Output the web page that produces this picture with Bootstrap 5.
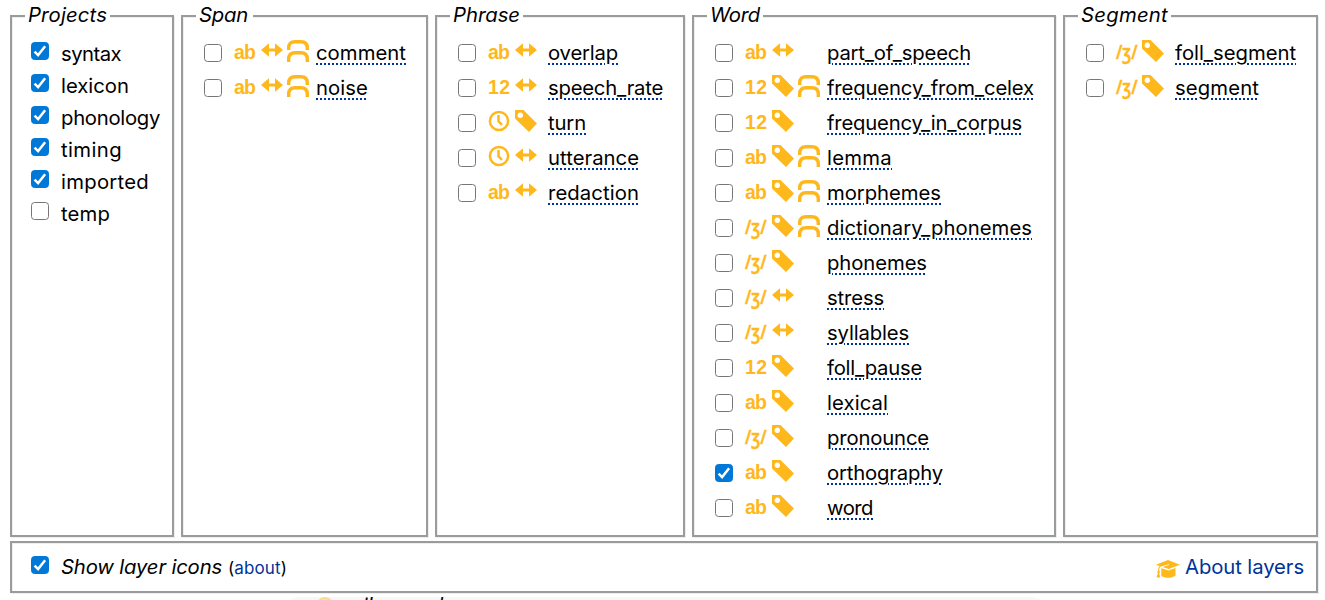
<!DOCTYPE html>
<html lang="en">
<head>
<meta charset="utf-8">
<title>Layers</title>
<link href="https://cdn.jsdelivr.net/npm/bootstrap@5.3.0/dist/css/bootstrap.min.css" rel="stylesheet">
<style>
body{font-family:Inter,Roboto,sans-serif;font-size:20.3px;line-height:32px;color:#000;background:#fff;height:600px;overflow:hidden}
.layer-grid{display:grid;grid-template-columns:164px 247px 250px 364px 255px;gap:7px;padding:15px 0 0 10px;height:537px}
.pane{position:relative;border:2px solid #9a9c9b;box-shadow:1px 1px 0 #eee,inset 1px 1px 0 #eee}
.pane-title{position:absolute;top:-18px;left:13px;height:32px;line-height:32px;background:#fff;font-style:italic;padding-left:3px;white-space:nowrap}
.fit{white-space:nowrap;display:block}
.form-check-input.box{width:18px;height:18px;margin:0;flex:none;border:1.5px solid #767676;border-radius:3.5px;background-color:#fff;box-shadow:none}
.form-check-input.box:checked{background-color:#0078d7;border-color:#0078d7;background-size:18px 18px;background-position:center;background-image:url("data:image/svg+xml,%3csvg xmlns='http://www.w3.org/2000/svg' viewBox='0 0 18 18'%3e%3cpath d='M3.6 9.6l3.5 3.5L14.1 4.3' fill='none' stroke='%23fff' stroke-width='2.5'/%3e%3c/svg%3e")}
.project{height:32px}
.project .box{margin-top:6px}
.project .fit{margin:2px 0 0 12px}
.projects{padding:19px 0 0 19px}
.layers{padding:18.5px 0 0 21px}
.layer{height:35px}
.ico{width:22px;height:22px;flex:none;display:block;fill:#ffb81c;overflow:visible}
.ico text{font-family:"Liberation Sans",sans-serif;font-weight:bold;font-size:19.5px}
.ico .ipa{font-family:"Noto Sans","DejaVu Sans",sans-serif;font-weight:600;font-size:19px;stroke:#ffb81c;stroke-width:.5px}
.lname{text-decoration:underline dotted #039 2px;text-underline-offset:3px;text-decoration-skip-ink:auto}
.footer-pane{margin:4px 0 0 10px;width:1308px;height:52px;padding:0 12px 0 19px}
.footer-pane .box{margin-top:-5px}
.about{color:#039;text-decoration:none}
.next-bar{margin:4px 0 0 290px;width:750px;height:3px;overflow:hidden;background:#f7f7f7;border-radius:12px 12px 0 0/3px 3px 0 0;padding-left:26px}
.next-bar .fit{line-height:24px;margin:-5px 0 0 18px}
</style>
</head>
<body>
<main class="layer-grid" id="grid"></main>
<footer class="pane footer-pane d-flex align-items-center">
  <input class="form-check-input box" type="checkbox" checked>
  <span class="fit fst-italic" data-w="161" style="margin-left:12px">Show layer icons</span>
  <span class="fit" data-w="59" style="margin-left:6px;font-size:17px;padding-top:2px">(<a class="about" href="#">about</a>)</span>
  <svg class="ms-auto mt-1" width="24" height="18" viewBox="0 0 24 18" fill="#ffb81c"><path d="M0 4.7L12 0l12 4.7-11.4 4.2-6-2 6.4-2-.3-.7-7.900 2.300C3.600 7.400 3.200 8.900 3.200 10.500l.8 1.500-.7 1.200.8 4.300H.5l1.300-4.300-.6-1.400.9-1.300c0-1.600.4-3.200 1.500-4.400z"/><path d="M5.300 8.200l7.200 2.400 7-2.500v7.300c-3.600 3.200-10.600 3.200-14.200.3z"/></svg>
  <a class="about fit" href="#" data-w="119" style="margin-left:5px">About layers</a>
</footer>
<div class="next-bar d-flex align-items-start">
  <svg width="18" height="18" viewBox="0 0 18 18"><circle cx="9" cy="9" r="8" fill="#ffe3a4" stroke="#ffd98a" stroke-width="2"/></svg>
  <span class="fit fst-italic" data-w="90">other word</span>
</div>
<script>
const icons = {
  ab:'<text x="0" y="18.700" textLength="22">ab</text>',
  num:'<text x="0" y="18.700" textLength="22">12</text>',
  ipa:'<text class="ipa" x="0" y="18.500" textLength="21.500" lengthAdjust="spacingAndGlyphs">/ʒ/</text>',
  clock:'<circle cx="11" cy="11" r="9.100" fill="none" stroke="#ffb81c" stroke-width="2.500"/><path d="M10.500 5v6.300l3.500 3.500" fill="none" stroke="#ffb81c" stroke-width="2.500"/>',
  arrow:'<path d="M0 10L8 3.300V8.500h6V3.300L22 10l-8 6.700v-5.200H8v5.200z"/>',
  tag:'<path fill-rule="evenodd" d="M0 0h8.500L22 13.500 14 22 0 8.500zM5.300 2.500a2.800 2.800 0 1 0 .01 0z"/>',
  arch:'<path d="M1.700 10V8Q1.700 1.700 8 1.700h6Q20.300 1.700 20.300 8v2M1.700 22v-3Q1.700 12.700 8 12.700h6Q20.300 12.700 20.300 19V22" fill="none" stroke="#ffb81c" stroke-width="3.400"/>'
};
const panes = [
 ['Span',49,57,3,[['ab arrow arch','comment',90],['ab arrow arch','noise',52]]],
 ['Phrase',67,73,2,[['ab arrow','overlap',70],['num arrow','speech_rate',115],['clock tag','turn',38],['clock arrow','utterance',91],['ab arrow','redaction',91]]],
 ['Word',50,56,3,[['ab arrow','part_of_speech',144],['num tag arch','frequency_from_celex',207],['num tag','frequency_in_corpus',195],['ab tag arch','lemma',65],['ab tag arch','morphemes',114],['ipa tag arch','dictionary_phonemes',205],['ipa tag','phonemes',100],['ipa arrow','stress',57],['ipa arrow','syllables',82],['num tag','foll_pause',95],['ab tag','lexical',61],['ipa tag','pronounce',102],['ab tag','orthography',116],['ab tag','word',46]]],
 ['Segment',87,93,2,[['ipa tag','foll_segment',121],['ipa tag','segment',84]]]
];
const title=(t,w,full)=>`<div class="pane-title" style="width:${full}px"><span class="fit" data-w="${w}">${t}</span></div>`;
const box=c=>`<input class="form-check-input box d-block" type="checkbox"${c?' checked':''}>`;
const svg=n=>`<svg class="ico" viewBox="0 0 22 22">${icons[n]||''}</svg>`;
let html=`<section class="pane projects">${title('Projects',79,85)}`;
[['syntax',60],['lexicon',68],['phonology',99],['timing',61],['imported',88],['temp',49]].forEach(([t,w])=>{
  html+=`<label class="project d-flex align-items-start">${box(t!=='temp')}<span class="fit" data-w="${w}">${t}</span></label>`;
});
html+='</section>';
panes.forEach(([t,w,full,n,rows])=>{
  html+=`<section class="pane layers">${title(t,w,full)}`;
  rows.forEach(([ic,name,nw])=>{
    const a=ic.split(' ');
    html+=`<div class="layer d-flex align-items-center">${box(name==='orthography')}<span class="d-flex" style="gap:4.500px;margin:-4px ${n===3?7:t==='Phrase'?11.5:11}px 0 ${t==='Segment'?11.5:12}px">${Array.from({length:n},(_,k)=>svg(a[k])).join('')}</span><span class="fit lname" data-w="${nw}">${name}</span></div>`;
  });
  html+='</section>';
});
document.getElementById('grid').innerHTML=html;
// Even out label widths with letter spacing
document.querySelectorAll('.fit').forEach(e=>{
  const r=document.createRange();r.selectNodeContents(e);
  e.style.letterSpacing=((+e.dataset.w-r.getBoundingClientRect().width)/e.textContent.length)+'px';
});
</script>
<script src="https://cdn.jsdelivr.net/npm/bootstrap@5.3.0/dist/js/bootstrap.bundle.min.js"></script>
</body>
</html>
